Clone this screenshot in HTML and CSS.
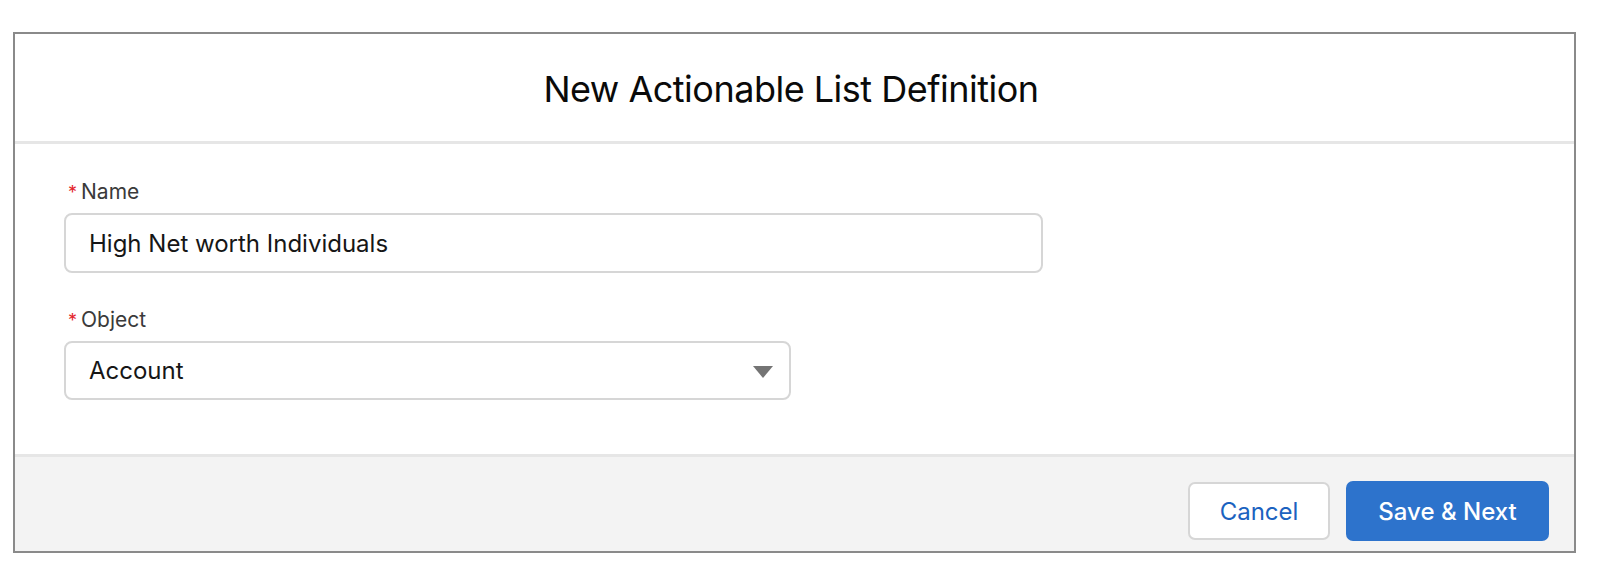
FILE: index.html
```html
<!DOCTYPE html>
<html lang="en">
<head>
<meta charset="utf-8">
<title>New Actionable List Definition</title>
<link rel="stylesheet" href="styles.css">
</head>
<body>
<div class="modal">
  <header class="modal-header">
    <h1 class="modal-title">New Actionable List Definition</h1>
  </header>
  <section class="modal-body">
    <div class="field">
      <label class="field-label"><abbr class="req">*</abbr>Name</label>
      <div class="input name-input">High Net worth Individuals</div>
    </div>
    <div class="field">
      <label class="field-label"><abbr class="req">*</abbr>Object</label>
      <div class="input select-input">
        <span>Account</span>
        <svg class="caret" width="20" height="12" viewBox="0 0 20 12"><path d="M0 0 H20 L10 12 Z" fill="#747474"/></svg>
      </div>
    </div>
  </section>
  <footer class="modal-footer">
    <button class="btn btn-neutral">Cancel</button>
    <button class="btn btn-brand">Save &amp; Next</button>
  </footer>
</div>
</body>
</html>
```

FILE: styles.css
```css
html, body {
  margin: 0;
  padding: 0;
  background: #ffffff;
}
body {
  font-family: Inter, "Noto Sans", "Liberation Sans", sans-serif;
  color: #181818;
}
.modal {
  margin: 32px 0 0 13px;
  width: 1563px;
  height: 521px;
  box-sizing: border-box;
  border: 2px solid #8a8a8a;
  display: flex;
  flex-direction: column;
}
.modal-header {
  height: 107px;
  border-bottom: 3px solid #e6e6e6;
  display: flex;
  align-items: center;
  justify-content: center;
  padding-right: 7px;
}
.modal-title {
  margin: 0;
  font-size: 36px;
  font-weight: 400;
  color: #0a0a0a;
  letter-spacing: -0.5px;
  padding-top: 2px;
}
.modal-body {
  flex: 1;
  padding: 36px 0 0 49px;
  display: flex;
  flex-direction: column;
  gap: 35px;
}
.field {
  display: flex;
  flex-direction: column;
  gap: 8px;
}
.field-label {
  font-size: 21px;
  line-height: 24px;
  color: #3a3a3a;
  display: flex;
  align-items: baseline;
}
.req {
  color: #e3242b;
  text-decoration: none;
  font-size: 18px;
  margin-right: 4px;
  margin-left: 4px;
}
.input {
  box-sizing: border-box;
  height: 60px;
  border: 2px solid #d6d6d6;
  border-radius: 8px;
  padding: 0 23px;
  display: flex;
  align-items: center;
  font-size: 24px;
  color: #161616;
  background: #fff;
}
.name-input {
  width: 979px;
}
.select-input {
  width: 727px;
  height: 59px;
  justify-content: space-between;
  padding-right: 16px;
}
.caret {
  display: block;
  margin-top: 2px;
}
.modal-footer {
  border-top: 3px solid #e6e6e6;
  background: #f3f3f3;
  height: 97px;
  box-sizing: border-box;
  padding: 24px 25px 0 0;
  display: flex;
  justify-content: flex-end;
  align-items: flex-start;
  gap: 16px;
}
.btn {
  font-family: Inter, "Noto Sans", "Liberation Sans", sans-serif;
  font-size: 24px;
  border-radius: 7px;
  cursor: pointer;
  padding: 0;
}
.btn-neutral {
  width: 142px;
  height: 58px;
  margin-top: 1px;
  background: #ffffff;
  border: 2px solid #d6d6d6;
  color: #1b62c0;
}
.btn-brand {
  width: 203px;
  height: 60px;
  background: #2d73cc;
  border: none;
  color: #ffffff;
  font-weight: 500;
}
```
